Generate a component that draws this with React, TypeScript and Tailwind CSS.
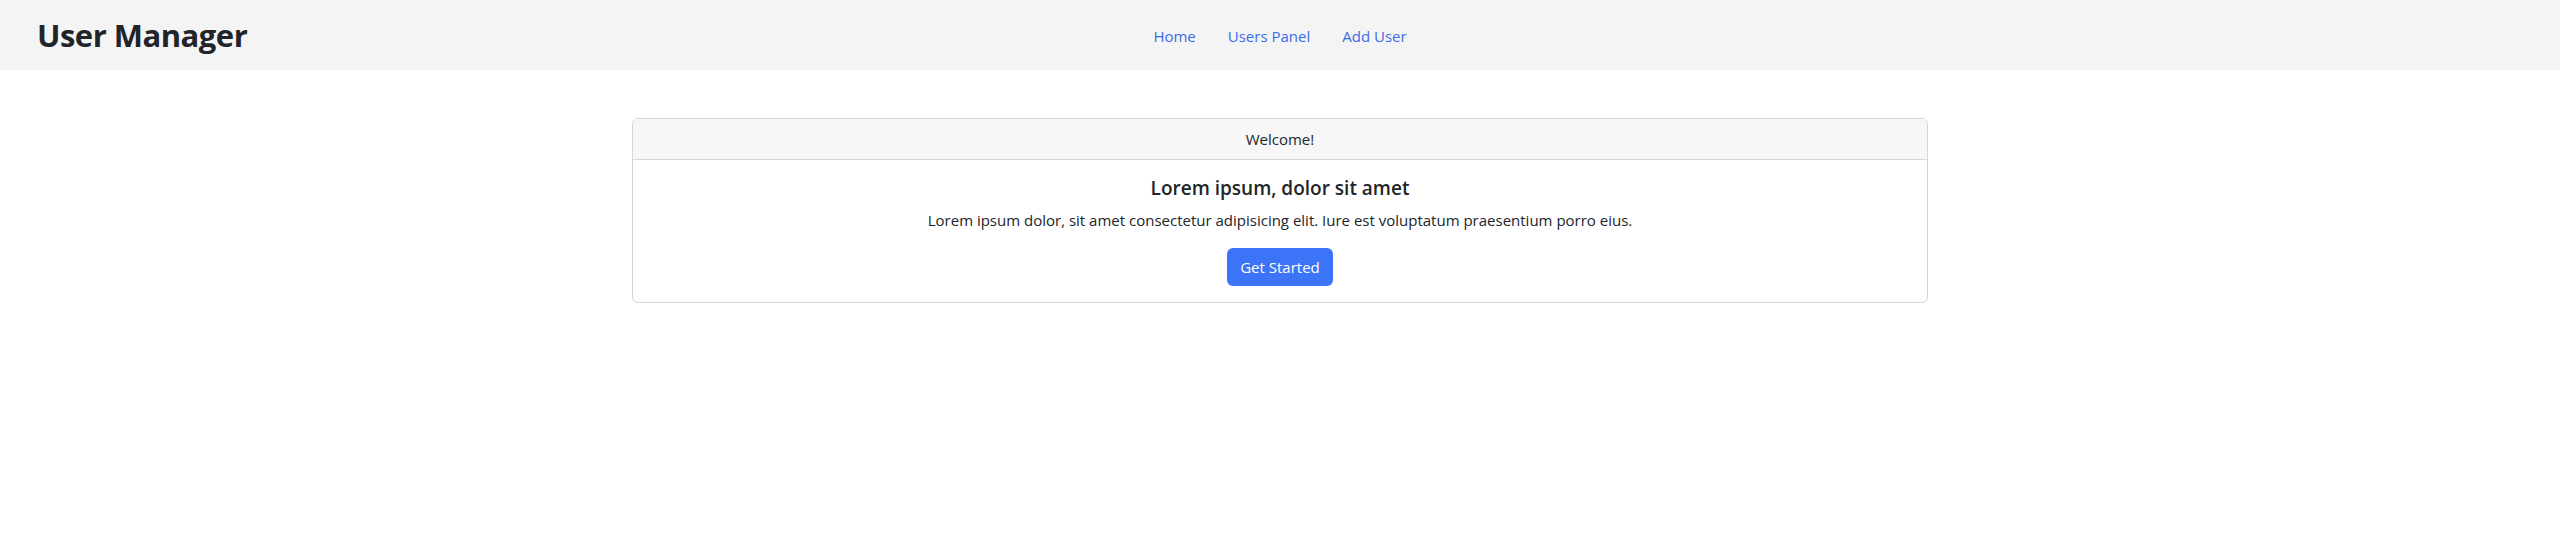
import React from "react";

export default function App() {
  const font = { fontFamily: '"Open Sans", "Noto Sans", sans-serif' };
  return (
    <div className="min-h-[549px] bg-white text-[#212529]" style={font}>
      <nav className="relative flex h-[70px] items-center bg-[#f4f4f4] px-[37px]">
        <div className="text-[31px] font-bold leading-none tracking-[-0.5px]">User Manager</div>
        <ul className="absolute left-1/2 top-0 flex h-full -translate-x-1/2 items-center pt-[2px] text-[15px]">
          <li><a className="block px-4 text-[#3c6be8]">Home</a></li>
          <li><a className="block px-4 text-[#3c6be8]">Users Panel</a></li>
          <li><a className="block px-4 text-[#3c6be8]">Add User</a></li>
        </ul>
      </nav>
      <div className="mx-auto mt-12 w-[1296px]">
        <div className="overflow-hidden rounded-[6px] border border-[#d6d6d6] text-center">
          <div className="border-b border-[#d6d6d6] bg-[#f7f7f7] px-4 py-2 text-[15px] leading-6">Welcome!</div>
          <div className="p-4">
            <h5 className="mb-2 text-[19px] font-semibold leading-6">Lorem ipsum, dolor sit amet</h5>
            <p className="mb-4 text-[15px] leading-6">
              Lorem ipsum dolor, sit amet consectetur adipisicing elit. Iure est voluptatum praesentium porro eius.
            </p>
            <button className="h-[38px] w-[106px] rounded-[6px] bg-[#3b74f7] text-[15px] text-white">Get Started</button>
          </div>
        </div>
      </div>
    </div>
  );
}
